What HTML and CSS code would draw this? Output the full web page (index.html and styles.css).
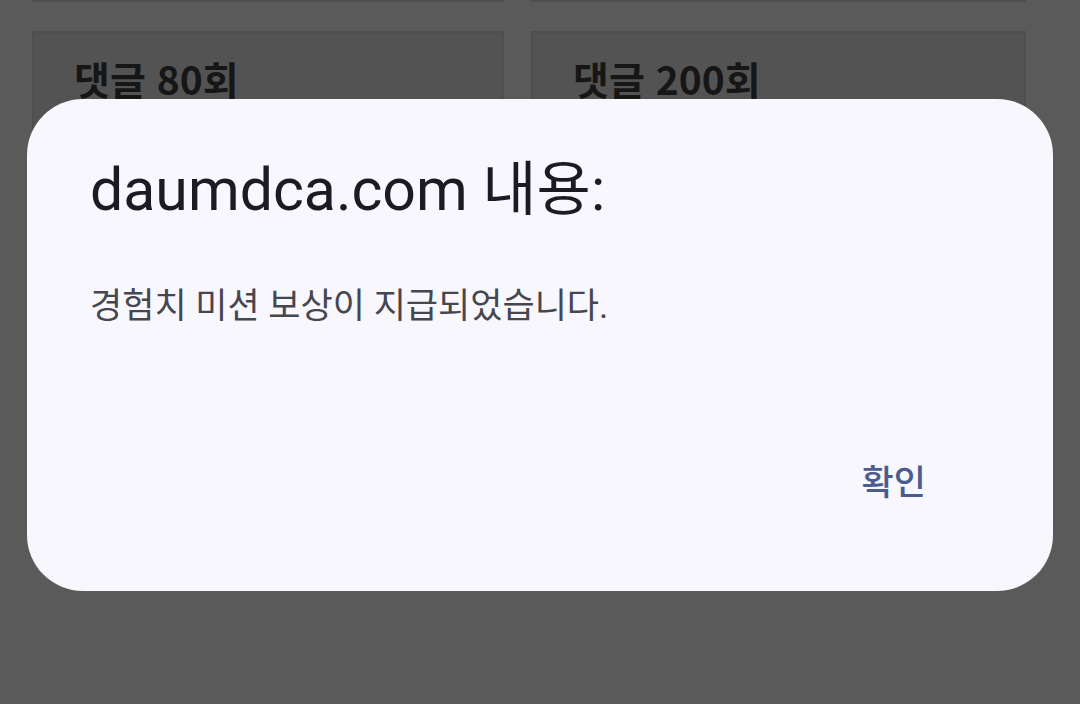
FILE: index.html
```html
<!DOCTYPE html>
<html lang="ko">
<head>
<meta charset="utf-8">
<link rel="stylesheet" href="styles.css">
</head>
<body>
<div class="page">
  <div class="grid">
    <div class="card"></div>
    <div class="card"></div>
    <div class="card"><h3 class="card-title">댓글 80회</h3></div>
    <div class="card"><h3 class="card-title">댓글 200회</h3></div>
    <div class="card"></div>
    <div class="card"></div>
  </div>
</div>
<div class="scrim">
  <div class="dialog">
    <h2 class="dialog-title">daumdca.com 내용:</h2>
    <p class="dialog-msg">경험치 미션 보상이 지급되었습니다.</p>
    <div class="dialog-actions">
      <button class="dialog-btn">확인</button>
    </div>
  </div>
</div>
</body>
</html>
```

FILE: styles.css
```css
html, body {
  margin: 0;
  padding: 0;
  width: 1080px;
  height: 704px;
  overflow: hidden;
  background: #5a5a5a;
}
.page {
  padding-left: 32px;
}
.grid {
  display: grid;
  grid-template-columns: 472px 495px;
  column-gap: 27px;
  row-gap: 29px;
  margin-top: -198px;
}
.card {
  height: 200px;
  box-sizing: border-box;
  border: 2px solid #4e4e4e;
  background: #535353;
  padding: 20px 40px;
}
.card-title {
  margin: 0;
  font-family: "Noto Sans CJK KR", "Noto Sans", sans-serif;
  font-weight: 700;
  font-size: 39px;
  line-height: 50px;
  color: #161616;
}
.scrim {
  position: fixed;
  inset: 0;
  display: flex;
  align-items: flex-start;
  justify-content: center;
}
.dialog {
  margin-top: 99px;
  width: 1026px;
  height: 492px;
  box-sizing: border-box;
  background: #f7f7fd;
  border-radius: 56px;
  padding: 56px 63px 0 63px;
  display: flex;
  flex-direction: column;
}
.dialog-title {
  margin: 0;
  font-family: Roboto, "Noto Sans CJK KR", sans-serif;
  font-weight: 400;
  font-size: 59px;
  line-height: 70px;
  color: #1b1b21;
}
.dialog-msg {
  margin: 58px 0 0 0;
  font-family: Roboto, "Noto Sans CJK KR", sans-serif;
  font-size: 35px;
  line-height: 48px;
  color: #46464f;
}
.dialog-actions {
  display: flex;
  justify-content: flex-end;
  margin-top: 127px;
}
.dialog-btn {
  border: none;
  background: none;
  padding: 0;
  margin-right: 64px;
  font-family: "Noto Sans CJK KR", Roboto, sans-serif;
  font-weight: 500;
  font-size: 35px;
  line-height: 44px;
  color: #4b5c8e;
}
```
